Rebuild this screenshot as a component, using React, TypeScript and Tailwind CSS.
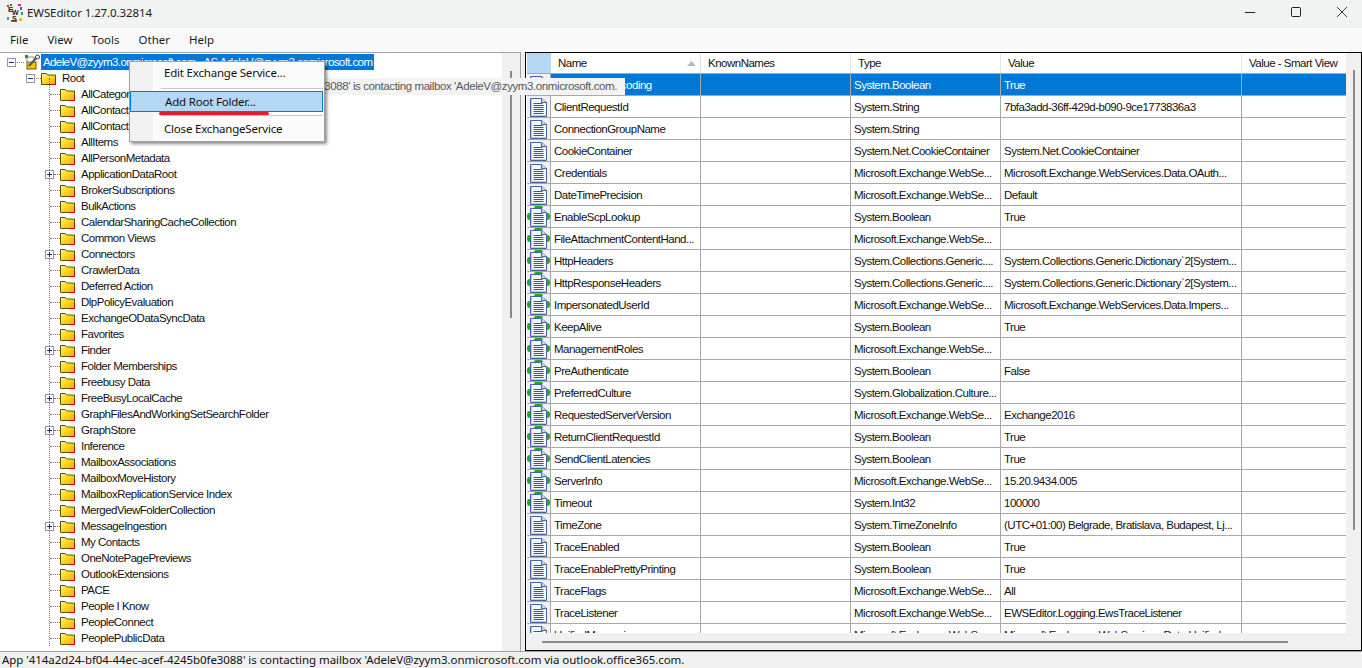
const font = { fontFamily: '"Noto Sans", sans-serif' }
const gridFont = { fontFamily: '"Liberation Sans", sans-serif' }

type TreeItem = { name: string; plus?: boolean }

const treeItems: TreeItem[] = [
  { name: 'AllCategories' },
  { name: 'AllContacts' },
  { name: 'AllContactList' },
  { name: 'AllItems' },
  { name: 'AllPersonMetadata' },
  { name: 'ApplicationDataRoot', plus: true },
  { name: 'BrokerSubscriptions' },
  { name: 'BulkActions' },
  { name: 'CalendarSharingCacheCollection' },
  { name: 'Common Views' },
  { name: 'Connectors', plus: true },
  { name: 'CrawlerData' },
  { name: 'Deferred Action' },
  { name: 'DlpPolicyEvaluation' },
  { name: 'ExchangeODataSyncData' },
  { name: 'Favorites' },
  { name: 'Finder', plus: true },
  { name: 'Folder Memberships' },
  { name: 'Freebusy Data' },
  { name: 'FreeBusyLocalCache', plus: true },
  { name: 'GraphFilesAndWorkingSetSearchFolder' },
  { name: 'GraphStore', plus: true },
  { name: 'Inference' },
  { name: 'MailboxAssociations' },
  { name: 'MailboxMoveHistory' },
  { name: 'MailboxReplicationService Index' },
  { name: 'MergedViewFolderCollection' },
  { name: 'MessageIngestion', plus: true },
  { name: 'My Contacts' },
  { name: 'OneNotePagePreviews' },
  { name: 'OutlookExtensions' },
  { name: 'PACE' },
  { name: 'People I Know' },
  { name: 'PeopleConnect' },
  { name: 'PeoplePublicData' },
]

type Prop = { name: string; type: string; value: string; green?: boolean }

const props: Prop[] = [
  { name: 'AcceptGzipEncoding', type: 'System.Boolean', value: 'True' },
  { name: 'ClientRequestId', type: 'System.String', value: '7bfa3add-36ff-429d-b090-9ce1773836a3' },
  { name: 'ConnectionGroupName', type: 'System.String', value: '' },
  { name: 'CookieContainer', type: 'System.Net.CookieContainer', value: 'System.Net.CookieContainer' },
  { name: 'Credentials', type: 'Microsoft.Exchange.WebSe...', value: 'Microsoft.Exchange.WebServices.Data.OAuth...' },
  { name: 'DateTimePrecision', type: 'Microsoft.Exchange.WebSe...', value: 'Default' },
  { name: 'EnableScpLookup', type: 'System.Boolean', value: 'True', green: true },
  { name: 'FileAttachmentContentHand...', type: 'Microsoft.Exchange.WebSe...', value: '', green: true },
  { name: 'HttpHeaders', type: 'System.Collections.Generic....', value: 'System.Collections.Generic.Dictionary`2[System...', green: true },
  { name: 'HttpResponseHeaders', type: 'System.Collections.Generic....', value: 'System.Collections.Generic.Dictionary`2[System...', green: true },
  { name: 'ImpersonatedUserId', type: 'Microsoft.Exchange.WebSe...', value: 'Microsoft.Exchange.WebServices.Data.Impers...', green: true },
  { name: 'KeepAlive', type: 'System.Boolean', value: 'True', green: true },
  { name: 'ManagementRoles', type: 'Microsoft.Exchange.WebSe...', value: '', green: true },
  { name: 'PreAuthenticate', type: 'System.Boolean', value: 'False', green: true },
  { name: 'PreferredCulture', type: 'System.Globalization.Culture...', value: '', green: true },
  { name: 'RequestedServerVersion', type: 'Microsoft.Exchange.WebSe...', value: 'Exchange2016', green: true },
  { name: 'ReturnClientRequestId', type: 'System.Boolean', value: 'True', green: true },
  { name: 'SendClientLatencies', type: 'System.Boolean', value: 'True', green: true },
  { name: 'ServerInfo', type: 'Microsoft.Exchange.WebSe...', value: '15.20.9434.005', green: true },
  { name: 'Timeout', type: 'System.Int32', value: '100000', green: true },
  { name: 'TimeZone', type: 'System.TimeZoneInfo', value: '(UTC+01:00) Belgrade, Bratislava, Budapest, Lj...' },
  { name: 'TraceEnabled', type: 'System.Boolean', value: 'True' },
  { name: 'TraceEnablePrettyPrinting', type: 'System.Boolean', value: 'True' },
  { name: 'TraceFlags', type: 'Microsoft.Exchange.WebSe...', value: 'All' },
  { name: 'TraceListener', type: 'Microsoft.Exchange.WebSe...', value: 'EWSEditor.Logging.EwsTraceListener' },
  { name: 'UnifiedMessaging', type: 'Microsoft.Exchange.WebSe...', value: 'Microsoft.Exchange.WebServices.Data.Unified...' },
]

function AppIcon() {
  return (
    <svg width="17" height="18" viewBox="0 0 17 18" className="shrink-0">
      <rect x="1" y="1" width="2" height="2" fill="#d13438" />
      <rect x="4" y="0" width="2" height="2" fill="#1f8a3a" />
      <rect x="12" y="0" width="3" height="2" fill="#d020c0" />
      <rect x="14" y="3" width="2" height="3" fill="#7a3fc4" />
      <rect x="15" y="8" width="2" height="3" fill="#18b04a" />
      <rect x="1" y="13" width="2" height="3" fill="#18a0d0" />
      <rect x="13" y="14" width="3" height="3" fill="#f2c200" />
      <rect x="5" y="16" width="6" height="2" fill="#e04020" />
      <text x="2" y="8" fontSize="8" fontWeight="700" fill="#222" fontFamily="Liberation Sans, sans-serif">E</text>
      <text x="6" y="11" fontSize="7" fontWeight="700" fill="#222" fontFamily="Liberation Sans, sans-serif">W</text>
      <text x="6" y="16.5" fontSize="7" fontWeight="700" fill="#222" fontFamily="Liberation Sans, sans-serif">S</text>
    </svg>
  )
}

function FolderIcon() {
  return (
    <svg width="15" height="13" viewBox="0 0 15 13" className="shrink-0">
      <defs>
        <linearGradient id="fold" x1="0" y1="0" x2="1" y2="1">
          <stop offset="0" stopColor="#fff0a0" />
          <stop offset="0.4" stopColor="#ffdc28" />
          <stop offset="1" stopColor="#f5a800" />
        </linearGradient>
      </defs>
      <path d="M0.5 12.5V1.5h5l1 1.5h8v9.5z" fill="url(#fold)" stroke="#5c5400" />
      <path d="M14.5 7v5.5H9" fill="none" stroke="#c80000" strokeWidth="1" />
    </svg>
  )
}

function DocIcon({ green }: { green?: boolean }) {
  return (
    <span className="relative block h-[21px] w-[23px]">
      {green && (
        <>
          <span className="absolute left-0 top-[7px] h-[7px] w-[3px] rounded-l-full bg-[#12b312]" />
          <span className="absolute right-0 top-[7px] h-[7px] w-[3px] rounded-r-full bg-[#12b312]" />
          <span className="absolute left-[7px] top-0 h-[2px] w-[9px] rounded-t-full bg-[#12b312]" />
        </>
      )}
      <svg width="17" height="20" viewBox="0 0 17 20" className="absolute left-[3px] top-[1px]">
        <path d="M0.5 1.5h11l5 4v14h-16z" fill="#f4f8ff" stroke="#47639c" />
        <path d="M1.5 2.5v16h14" fill="none" stroke="#b7c8e8" />
        <path d="M11.5 1.5v4h5" fill="#c9d6ee" stroke="#47639c" />
        <path d="M3.5 6.5h9M3.5 8.5h10M3.5 10.5h10M3.5 12.5h10M3.5 14.5h10M3.5 16.5h10" stroke="#2f52b4" strokeWidth="1" />
      </svg>
    </span>
  )
}

function Expander({ minus }: { minus?: boolean }) {
  return (
    <span className="relative z-10 flex h-[9px] w-[9px] shrink-0 items-center justify-center border border-[#8c97a8] bg-white">
      <span className="absolute h-px w-[5px] bg-[#1c2f5e]" />
      {!minus && <span className="absolute h-[5px] w-px bg-[#1c2f5e]" />}
    </span>
  )
}

function TitleBar() {
  return (
    <div className="flex h-[28px] shrink-0 items-center bg-[#f1f3f3] pb-[2px] pl-[6px] text-[11.5px] tracking-[-0.1px] text-[#1a1a1a]">
      <AppIcon />
      <span className="ml-[4px]">EWSEditor 1.27.0.32814</span>
      <div className="-mr-[3px] ml-auto flex items-center pb-[2px] text-[#222]">
        <span className="flex h-[24px] w-[46px] items-center justify-center">
          <svg width="10" height="10" viewBox="0 0 10 10"><path d="M0 5.5h10" stroke="currentColor" /></svg>
        </span>
        <span className="flex h-[24px] w-[46px] items-center justify-center">
          <svg width="10" height="10" viewBox="0 0 10 10"><rect x="0.5" y="0.5" width="9" height="9" rx="1" fill="none" stroke="currentColor" /></svg>
        </span>
        <span className="flex h-[24px] w-[46px] items-center justify-center">
          <svg width="10" height="10" viewBox="0 0 10 10"><path d="M0 0l10 10M10 0L0 10" stroke="currentColor" strokeWidth="0.9" /></svg>
        </span>
      </div>
    </div>
  )
}

function MenuBar() {
  return (
    <div className="flex h-[24px] shrink-0 items-center gap-[19px] bg-[#f9f9f9] pl-[10px] text-[11.5px] text-[#1a1a1a]">
      {['File', 'View', 'Tools', 'Other', 'Help'].map((m) => (
        <span key={m}>{m}</span>
      ))}
    </div>
  )
}

function TreePane() {
  return (
    <div style={gridFont} className="relative flex h-full w-[521px] shrink-0 overflow-hidden border-r border-t border-[#a0a0a0] bg-white text-[11.5px] tracking-[-0.5px] text-[#111]">
      <div className="relative h-full min-w-0 flex-1 overflow-hidden pt-[1px]">
        <div className="flex h-[16px] items-center pl-[7px]">
          <Expander minus />
          <span className="ml-[1px] w-[7px] border-t border-dotted border-[#777]" />
          <svg width="16" height="16" viewBox="0 0 16 16" className="shrink-0">
            <rect x="3" y="8" width="9" height="7" fill="#f5c400" stroke="#6b5a00" />
            <path d="M3 3h7v5H3z" fill="#fff" stroke="#888" />
            <path d="M5 12L13 3" stroke="#555" strokeWidth="2" />
            <circle cx="13.5" cy="3" r="2" fill="#fff" stroke="#333" />
            <rect x="1" y="1" width="3" height="3" fill="#2d8a3e" />
          </svg>
          <span className="ml-[1px] h-[16px] whitespace-nowrap bg-[#0078d7] px-[2px] leading-[16px] tracking-[-0.6px] text-white">
            AdeleV@zyym3.onmicrosoft.com - AS AdeleV@zyym3.onmicrosoft.com
          </span>
        </div>
        <div className="flex h-[16px] items-center pl-[26px]">
          <Expander minus />
          <span className="ml-[1px] w-[5px] border-t border-dotted border-[#777]" />
          <FolderIcon />
          <span className="ml-[6px] pt-[1px]">Root</span>
        </div>
        <div className="relative">
          <span className="absolute bottom-0 left-[49px] -top-[8px] border-l border-dotted border-[#777]" />
          {treeItems.map((t) => (
            <div key={t.name} className="flex h-[16px] items-center pl-[45px]">
              {t.plus ? <Expander /> : <span className="w-[5px]" />}
              <span className={`border-t border-dotted border-[#777] ${t.plus ? 'w-[6px]' : 'w-[10px]'}`} />
              <FolderIcon />
              <span className="ml-[6px] whitespace-nowrap pt-[1px]">{t.name}</span>
            </div>
          ))}
        </div>
      </div>
      <div className="flex h-full w-[18px] shrink-0 justify-center bg-[#f0f0f0] pt-[18px]">
        <span className="h-[247px] w-[2px] bg-[#8a8a8a]" />
      </div>
    </div>
  )
}

function Cell({ w, children }: { w: string; children?: React.ReactNode }) {
  return <div className={`flex h-full shrink-0 items-center overflow-hidden whitespace-nowrap border-r border-[#a8a8a8] pl-[3px] pt-[2px] ${w}`}>{children}</div>
}

function PropGrid() {
  return (
    <div style={gridFont} className="flex h-full min-w-0 flex-1 flex-col border border-black bg-[#f0f0f0] text-[11.5px] tracking-[-0.5px] text-[#111]">
      <div className="flex min-h-0 flex-1">
        <div className="min-w-0 flex-1 overflow-hidden bg-white pl-[1px]">
          <div className="flex h-[21px] items-center border-b border-[#a8a8a8]">
            <div className="h-full w-[24px] shrink-0 bg-[#b5d7f3]" />
            <div className="relative flex h-full w-[150px] shrink-0 items-center border-r border-[#e4e4e4] pl-[7px] pt-[1px]">
              Name
              <svg width="9" height="5" viewBox="0 0 9 5" className="absolute right-[4px] top-[8px]"><path d="M4.5 0L9 5H0z" fill="#b8b8b8" /></svg>
            </div>
            <div className="flex h-full w-[150px] shrink-0 items-center border-r border-[#e4e4e4] pl-[7px] pt-[1px]">KnownNames</div>
            <div className="flex h-full w-[150px] shrink-0 items-center border-r border-[#e4e4e4] pl-[7px] pt-[1px]">Type</div>
            <div className="flex h-full w-[241px] shrink-0 items-center border-r border-[#e4e4e4] pl-[7px] pt-[1px]">Value</div>
            <div className="flex h-full flex-1 items-center overflow-hidden whitespace-nowrap pl-[7px] pt-[1px]">Value - Smart View</div>
          </div>
          {props.map((p, i) => (
            <div
              key={p.name}
              className={`flex h-[22px] border-b border-[#a8a8a8] ${i === 0 ? 'bg-[#0078d7] text-white' : 'bg-white'}`}
            >
              <div className="flex h-full w-[24px] shrink-0 items-center justify-center border-r border-[#a8a8a8] bg-[#f0f0f0]">
                <DocIcon green={p.green} />
              </div>
              <Cell w="w-[150px]">{p.name}</Cell>
              <Cell w="w-[150px]" />
              <Cell w="w-[150px]">{p.type}</Cell>
              <Cell w="w-[241px]">{p.value}</Cell>
              <div className="flex-1" />
            </div>
          ))}
        </div>
        <div className="flex w-[15px] shrink-0 justify-center pt-[17px]">
          <span className="h-[460px] w-[2px] bg-[#8a8a8a]" />
        </div>
      </div>
      <div className="flex h-[17px] shrink-0 items-center pl-[16px]">
        <span className="h-[2px] w-[746px] bg-[#8a8a8a]" />
      </div>
    </div>
  )
}

function ContextMenu() {
  return (
    <div className="absolute left-[129px] top-[61px] h-[81px] w-[196px] border border-[#a0a0a0] bg-[#fbfbfb] text-[11.5px] tracking-[-0.2px] text-[#111] shadow-[2px_2px_3px_rgba(0,0,0,0.45)]">
      <div className="absolute bottom-0 left-0 top-0 w-[23px] bg-[#f1f1f1]" />
      <div className="relative flex h-[22px] items-center pl-[34px]">Edit Exchange Service...</div>
      <div className="relative ml-[31px] mr-[1px] mt-[4px] h-px bg-[#c8c8c8]" />
      <div className="relative mr-[1px] mt-[2px] flex h-[21px] items-center border border-[#0078d7] bg-[#b5d7f3] pl-[34px]">Add Root Folder...</div>
      <div className="absolute left-[29px] top-[50px] h-[3px] w-[110px] rounded-full bg-[#e81c24]" />
      <div className="relative ml-[31px] mr-[1px] mt-[3px] h-px bg-[#c8c8c8]" />
      <div className="relative flex h-[25px] items-center pl-[34px]">Close ExchangeService</div>
    </div>
  )
}

export default function App() {
  return (
    <div style={font} className="relative flex h-[668px] w-[1362px] flex-col overflow-hidden bg-[#f0f0f0]">
      <TitleBar />
      <MenuBar />
      <div className="flex h-[599px] shrink-0 items-stretch">
        <TreePane />
        <div className="w-[4px] shrink-0" />
        <PropGrid />
      </div>
      <div className="flex min-h-0 flex-1 items-center overflow-hidden whitespace-nowrap border-t border-[#a0a0a0] pl-[2px] text-[11.5px] tracking-[-0.06px] text-[#111]">
        App '414a2d24-bf04-44ec-acef-4245b0fe3088' is contacting mailbox 'AdeleV@zyym3.onmicrosoft.com via outlook.office365.com.
      </div>
      <div style={gridFont} className="absolute left-[320px] top-[78px] flex h-[17px] w-[305px] items-center justify-end whitespace-nowrap bg-[#f3f3f3] pr-[8px] text-[11.5px] tracking-[-0.4px] text-[#575757]">
        e3088' is contacting mailbox 'AdeleV@zyym3.onmicrosoft.com.
      </div>
      <ContextMenu />
    </div>
  )
}
